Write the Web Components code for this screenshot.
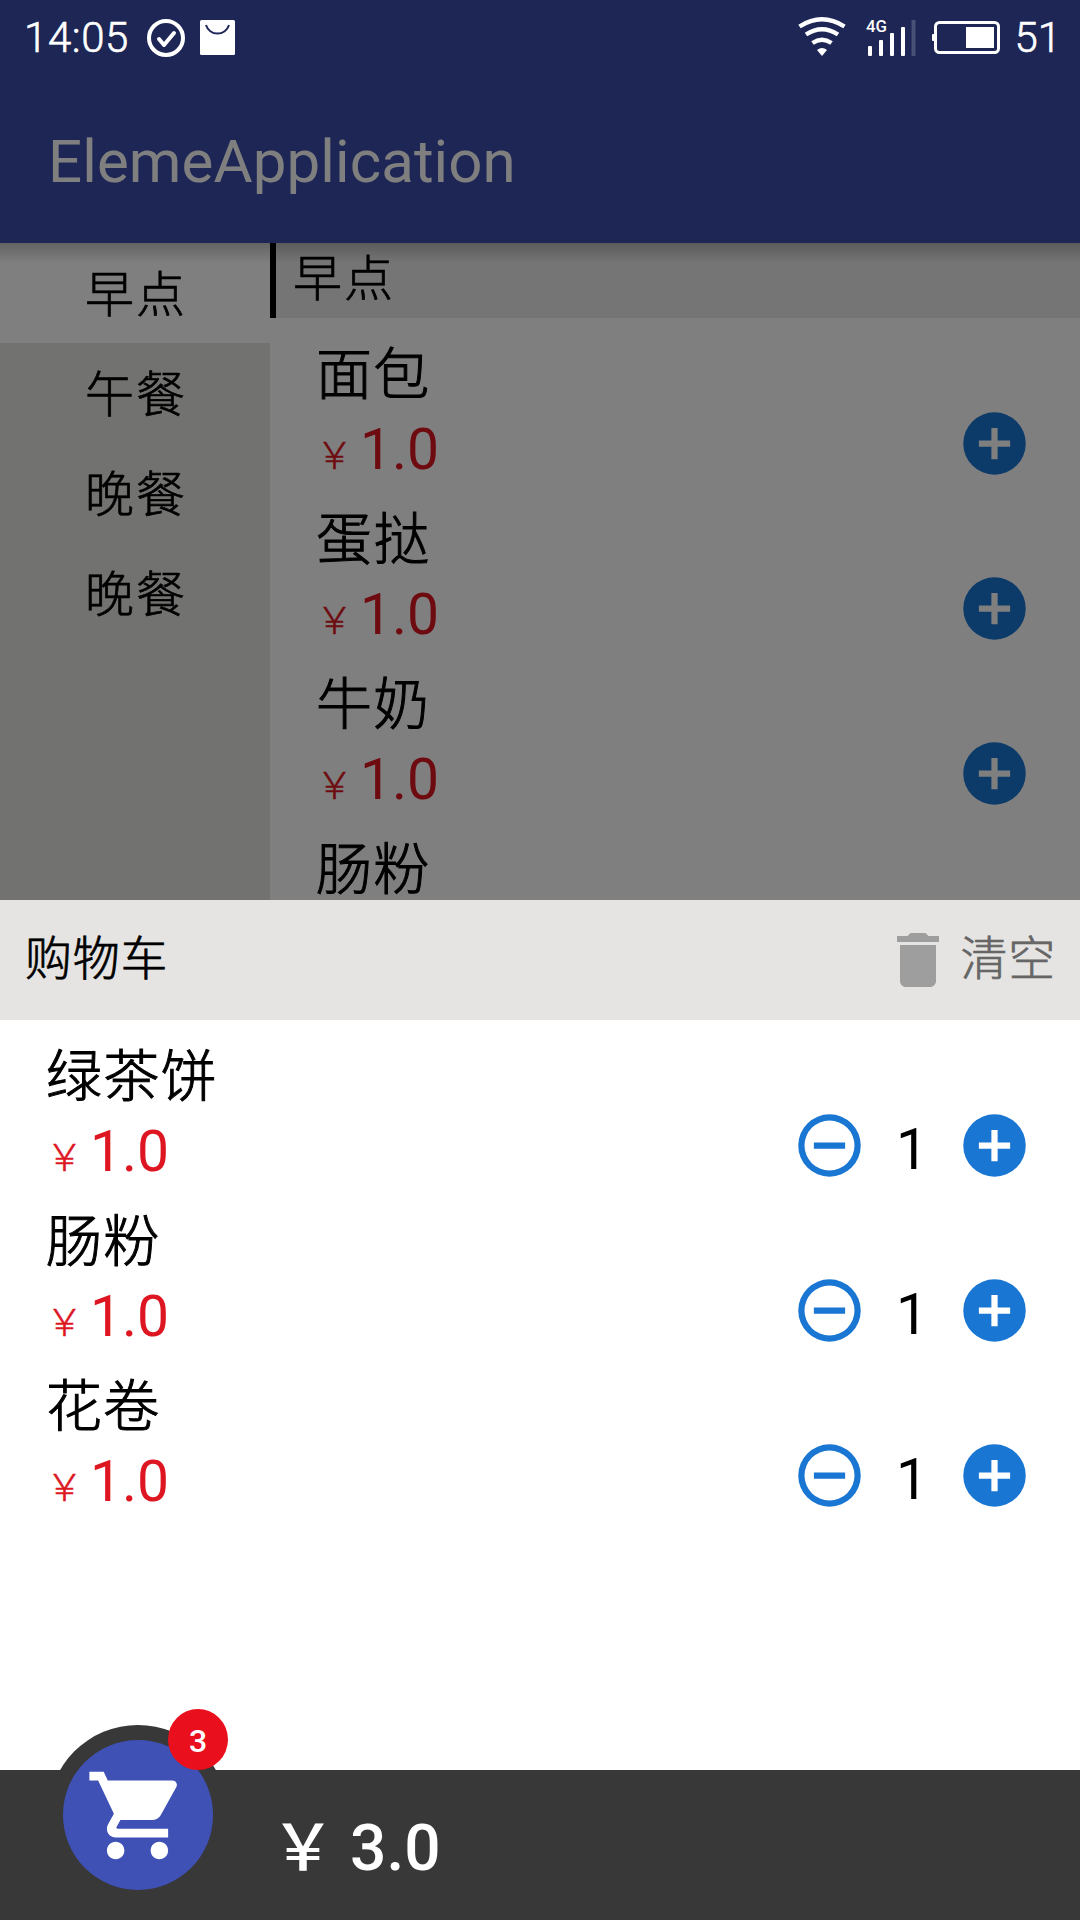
<!DOCTYPE html>
<html lang="zh-CN">
<head>
<meta charset="utf-8">
<title>ElemeApplication</title>
<style>
body{margin:0;background:#fff;font-family:Roboto,"Noto Sans CJK SC",sans-serif}
</style>
</head>
<body>
<eleme-app></eleme-app>
<script>
const define = (name, html) => customElements.define(name, class extends HTMLElement {
  constructor() {
    super();
    const t = document.createElement('template');
    t.innerHTML = html;
    this.attachShadow({ mode: 'open' }).append(t.content.cloneNode(true));
  }
});

define('status-bar', `<style>
:host{display:flex;align-items:center;justify-content:space-between;height:75px;padding:0 17px 0 24px;color:#fff;font-size:42px;font-weight:300;line-height:75px;box-sizing:border-box;-webkit-text-stroke:.6px #fff}
div{display:flex;align-items:center}
svg{display:block;flex:none;-webkit-text-stroke:0}
.time{letter-spacing:.6px;width:122px}
.level{margin-left:-2px;margin-right:2px}
</style>
<div><span class="time">14:05</span>
<svg width="90" height="75" viewBox="0 0 90 75"><circle cx="20" cy="38" r="17" fill="none" stroke="#fff" stroke-width="4"/><path d="M13 39l5 6 10-12" fill="none" stroke="#fff" stroke-width="4" stroke-linecap="round" stroke-linejoin="round"/><rect x="54" y="20" width="35" height="35" rx="1.5" fill="#fff"/><path d="M60 25a12 12 0 0 0 23 0" fill="none" stroke="#1f285a" stroke-width="2"/></svg></div>
<div><svg width="218" height="75" viewBox="798 0 218 75" fill="none" stroke="#fff">
<g stroke-width="4.4"><path d="M799.5 26.500Q822 12 844.500 26.500"/><path d="M806 34.500Q822 24 838 34.500"/><path d="M812.500 43Q822 36.500 831.500 43"/></g>
<path d="M817 50q5-4 10 0l-5 6z" fill="#fff" stroke="none"/>
<text x="866" y="32" font-family="Roboto" font-weight="500" font-size="17" fill="#fff" stroke="none" textLength="21" lengthAdjust="spacingAndGlyphs">4G</text>
<g fill="#fff" stroke="none"><rect x="868" y="46" width="4" height="10" rx="1"/><rect x="879" y="40" width="4" height="16" rx="1"/><rect x="890" y="33" width="4" height="23" rx="1"/><rect x="901" y="27" width="4" height="29" rx="1"/><rect x="911.500" y="20" width="4" height="36" opacity=".2"/>
<rect x="966" y="27" width="28" height="21"/><rect x="932" y="34" width="3" height="7" rx="1"/></g>
<rect x="935.500" y="22.500" width="63" height="30" rx="4" stroke-width="3"/></svg><span class="level">51</span></div>`);

define('tool-bar', `<style>
:host{display:flex;align-items:center;height:168px;padding:4px 48px 0;box-sizing:border-box;color:#fff;font-size:60px;font-weight:400;letter-spacing:.1px}
</style><slot></slot>`);

define('category-item', `<style>
:host{display:flex;justify-content:center;align-items:center;height:100px;padding:0 0 5px 2px;box-sizing:border-box;font-size:49px;font-weight:300;letter-spacing:2px;color:#000;-webkit-text-stroke:.7px currentColor}
:host([selected]){background:#fff}
</style><slot></slot>`);

define('round-button', `<style>
:host{display:block;width:75px;height:75px}
svg{display:none;width:75px;height:75px;fill:#1976d2}
:host([kind=add]) .add,:host([kind=remove]) .remove{display:block}
</style>
<svg class="add" viewBox="0 0 24 24"><path d="M12 2a10 10 0 1 0 0 20 10 10 0 0 0 0-20zm5 11h-4v4h-2v-4H7v-2h4V7h2v4h4z"/></svg>
<svg class="remove" viewBox="0 0 24 24"><path d="M7 11v2h10v-2zm5-9a10 10 0 1 0 0 20 10 10 0 0 0 0-20zm0 18a8 8 0 1 1 0-16 8 8 0 0 1 0 16z"/></svg>`);

define('food-row', `<style>
:host{display:flex;justify-content:space-between;height:165px;box-sizing:border-box;padding-right:48px}
.info{padding:21px 0 0 46px}
.name{height:72px;line-height:72px;font-size:56px;font-weight:300;letter-spacing:1.2px;color:#000;white-space:nowrap;-webkit-text-stroke:1px #000}
.price{display:flex;align-items:baseline;height:72px;line-height:72px;padding-top:3px;color:#dd1622;font-size:57px;font-weight:400}
.yen{font:300 37px/72px "Noto Sans CJK SC",sans-serif;width:44px;flex:none;box-sizing:border-box;-webkit-text-stroke:.5px currentColor}
.acts{display:flex;padding-top:88px}
.count{display:none;width:90px;text-align:center;font-size:57px;font-weight:400;line-height:83px}
:host([counted]) .count{display:block}
.minus{display:none}
:host([counted]) .minus{display:block}
:host([name-only]) .price{display:none}
</style>
<div class="info"><div class="name"><slot></slot></div><div class="price"><span class="yen">￥</span><span><slot name="price"></slot></span></div></div>
<div class="acts"><round-button class="minus" kind="remove"></round-button><span class="count"><slot name="count"></slot></span><round-button kind="add"></round-button></div>`);

define('menu-page', `<style>
:host{display:flex;height:657px;overflow:hidden;background:#fff;position:relative}
nav{width:270px;background:#e5e4e1;flex:none}
main{flex:1}
h2{margin:0;height:75px;box-sizing:border-box;border-left:6px solid #000;background:#ebebeb;padding-left:17px;font-size:49px;font-weight:300;letter-spacing:2px;line-height:74px;-webkit-text-stroke:.7px currentColor}
.shade{height:20px;position:absolute;inset:0 0 auto 0;background:linear-gradient(rgba(0,0,0,.22),rgba(0,0,0,.12) 45%,transparent)}
</style>
<nav><category-item selected>早点</category-item><category-item>午餐</category-item><category-item>晚餐</category-item><category-item>晚餐</category-item></nav>
<main><h2>早点</h2>
<food-row>面包<span slot="price">1.0</span></food-row>
<food-row>蛋挞<span slot="price">1.0</span></food-row>
<food-row>牛奶<span slot="price">1.0</span></food-row>
<food-row name-only>肠粉</food-row>
</main><div class="shade"></div>`);

define('cart-sheet', `<style>
:host{display:block;height:870px;background:#fff}
header{display:flex;align-items:center;justify-content:space-between;height:120px;padding:0 24px 0 25px;box-sizing:border-box;background:#e5e4e2;font-size:47px;font-weight:300;letter-spacing:.8px;color:#000;-webkit-text-stroke:.7px currentColor}
.title{margin-top:-12px}
.clear{display:flex;align-items:center;color:#666}
.clear span{margin:-12px 0 0 6px;-webkit-text-stroke:.7px #666}
svg{display:block;width:72px;height:72px;fill:#9e9e9e}
</style>
<header><span class="title">购物车</span><div class="clear"><svg viewBox="0 0 24 24"><path d="M6 19c0 1.100.9 2 2 2h8c1.100 0 2-.9 2-2V7H6v12zM19 4h-3.500l-1-1h-5l-1 1H5v2h14V4z"/></svg><span>清空</span></div></header>
<food-row counted>绿茶饼<span slot="price">1.0</span><span slot="count">1</span></food-row>
<food-row counted>肠粉<span slot="price">1.0</span><span slot="count">1</span></food-row>
<food-row counted>花卷<span slot="price">1.0</span><span slot="count">1</span></food-row>`);

define('cart-bar', `<style>
:host{display:flex;align-items:flex-start;height:150px;background:#383838;color:#fff;padding-left:48px;box-sizing:border-box}
.cart{position:relative;width:180px;height:180px;margin-top:-45px;border-radius:50%;background:#383838;display:flex;align-items:center;justify-content:center;flex:none}
.disc{width:150px;height:150px;border-radius:50%;background:#3f51b5;display:flex;align-items:center;justify-content:center}
svg{width:105px;height:105px;fill:#fff;margin-right:2px}
.badge{position:absolute;top:-16px;right:0;width:60px;height:61px;border-radius:50%;background:#e90f1c;font-size:32px;font-weight:500;line-height:64px;text-align:center}
.total{display:flex;align-items:baseline;font-size:64px;font-weight:500;line-height:90px;margin:27px 0 0 43px}
.yen{font:500 64px/90px "Noto Sans CJK SC",sans-serif;width:79px;flex:none;box-sizing:border-box}
</style>
<div class="cart"><div class="disc"><svg viewBox="0 0 24 24"><path d="M7 18c-1.100 0-1.990.9-1.990 2S5.900 22 7 22s2-.9 2-2-.9-2-2-2zM1 2v2h2l3.600 7.590-1.350 2.450c-.16.28-.25.61-.25.96 0 1.100.9 2 2 2h12v-2H7.420c-.14 0-.25-.11-.25-.25l.03-.12.900-1.630h7.450c.75 0 1.410-.41 1.750-1.030l3.580-6.490A1.003 1.003 0 0 0 20 4H5.210l-.94-2H1zM17 18c-1.100 0-1.990.9-1.990 2s.89 2 1.990 2 2-.9 2-2-.9-2-2-2z"/></svg></div><span class="badge">3</span></div>
<div class="total"><span class="yen">￥</span><span>3.0</span></div>`);

define('eleme-app', `<style>
:host{display:block;width:1080px;height:1920px;overflow:hidden;position:relative}
.top{background:#3b4cab}
.status{position:relative;z-index:2}
.scrim{position:absolute;inset:0 0 auto 0;height:900px;background:rgba(0,0,0,.5);z-index:1}
</style>
<div class="top"><status-bar class="status"></status-bar><tool-bar>ElemeApplication</tool-bar></div>
<menu-page></menu-page>
<div class="scrim"></div>
<cart-sheet></cart-sheet>
<cart-bar></cart-bar>`);
</script>
</body>
</html>
